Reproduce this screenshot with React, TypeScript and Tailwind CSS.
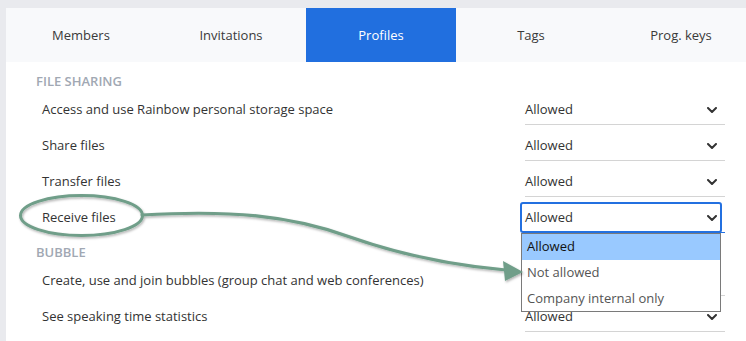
import React from "react";

const Chevron = () => (
  <svg width="10" height="6" viewBox="0 0 10 6" className="shrink-0">
    <path d="M1 1 L5 5 L9 1" fill="none" stroke="#333" strokeWidth="2" strokeLinecap="round" strokeLinejoin="round" />
  </svg>
);

const tabs = ["Members", "Invitations", "Profiles", "Tags", "Prog. keys"];

function Row({ label, focused = false, open = false }: { label: string; focused?: boolean; open?: boolean }) {
  return (
    <div className="flex h-[36px] items-start">
      <div className="flex h-[33px] w-[519px] items-center pl-[36px] text-[13px] text-[#333]">{label}</div>
      <div className="relative h-[32px] w-[200px]">
        {focused && (
          <div className="absolute left-[-5px] right-[3px] top-[1px] bottom-[0px] rounded-[3px] border-2 border-[#2370e0]" />
        )}
        <div
          className={
            "relative flex h-full items-center justify-between pr-[8px] pt-[2px] text-[13px] text-[#333] border-b " +
            (focused ? "border-[#2370e0]" : "border-[#d4d4d4]")
          }
        >
          <span>Allowed</span>
          <Chevron />
        </div>
        {open && (
          <div className="absolute left-[-4px] top-[32px] z-10 w-[200px] border border-[#7a7a7a] bg-white text-[13px]">
            <div className="flex h-[26px] items-center bg-[#99c9ff] pl-[5px] text-[#111]">Allowed</div>
            <div className="flex h-[26px] items-center pl-[5px] text-[#555]">Not allowed</div>
            <div className="flex h-[25px] items-center pl-[5px] text-[#555]">Company internal only</div>
          </div>
        )}
      </div>
    </div>
  );
}

export default function App() {
  return (
    <div
      className="relative h-[341px] w-[746px] overflow-hidden bg-[#e9eaee] pl-[6px] pt-[8px]"
      style={{ fontFamily: '"Open Sans", "Noto Sans", sans-serif' }}
    >
      <div className="h-[400px] w-[760px] bg-white">
        <div className="flex h-[54px] bg-[#f8f9fb]">
          {tabs.map((t) => (
            <div
              key={t}
              className={
                "flex w-[150px] items-center justify-center pt-[2px] text-[13px] " +
                (t === "Profiles" ? "bg-[#216fdf] text-white" : "text-[#3a3a3a]")
              }
            >
              {t}
            </div>
          ))}
        </div>
        <div className="h-[31px] pl-[30px] pt-[11px] text-[13px] font-semibold leading-[17px] text-[#a1a8b3]">FILE SHARING</div>
        <Row label="Access and use Rainbow personal storage space" />
        <Row label="Share files" />
        <Row label="Transfer files" />
        <Row label="Receive files" focused open />
        <div className="h-[27px] pl-[30px] pt-[7px] text-[13px] font-semibold leading-[17px] text-[#a1a8b3]">BUBBLE</div>
        <Row label="Create, use and join bubbles (group chat and web conferences)" />
        <Row label="See speaking time statistics" />
      </div>
      <svg
        className="pointer-events-none absolute left-0 top-0 z-20"
        width="746"
        height="341"
        viewBox="0 0 746 341"
      >
        <defs>
          <filter id="sh" x="-10%" y="-10%" width="120%" height="130%">
            <feDropShadow dx="1" dy="1.5" stdDeviation="0.8" floodColor="#000" floodOpacity="0.3" />
          </filter>
        </defs>
        <g filter="url(#sh)">
          <ellipse cx="81.5" cy="215.5" rx="61" ry="20" fill="none" stroke="#6f9e89" strokeWidth="3" />
          <path
            d="M142 215 C 230 210, 290 215, 350 237 C 410 258, 460 266, 506 270"
            fill="none"
            stroke="#6f9e89"
            strokeWidth="3.2"
            strokeLinecap="round"
          />
          <polygon points="503,261 523,272 505,281" fill="#6f9e89" />
        </g>
      </svg>
    </div>
  );
}
